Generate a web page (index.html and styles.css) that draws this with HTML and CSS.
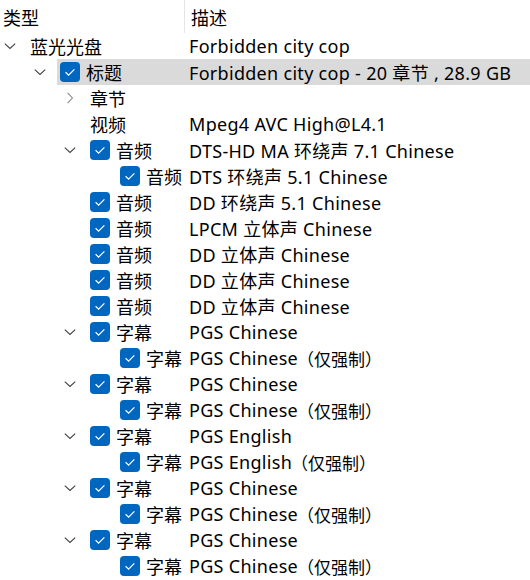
FILE: index.html
```html
<!DOCTYPE html>
<html lang="zh-CN">
<head>
  <meta charset="UTF-8">
  <meta name="viewport" content="width=device-width, initial-scale=1.0">
  <title>光盘内容</title>
  <link rel="stylesheet" href="styles.css">
</head>
<body>
  <div class="tree-view">
    <div class="header">
      <div class="col col-type">类型</div>
      <div class="col col-desc">描述</div>
    </div>

    <div class="row">
      <div class="tree l0"><span class="twisty open"></span><span class="name">蓝光光盘</span></div>
      <div class="desc">Forbidden city cop</div>
    </div>
    <div class="row selected">
      <div class="tree l1"><span class="twisty open"></span><span class="name"><span class="check"></span>标题</span></div>
      <div class="desc">Forbidden city cop - 20 章节 , 28.9 GB</div>
    </div>
    <div class="row">
      <div class="tree l2"><span class="twisty closed"></span><span class="name">章节</span></div>
      <div class="desc"></div>
    </div>
    <div class="row">
      <div class="tree l2"><span class="twisty"></span><span class="name">视频</span></div>
      <div class="desc">Mpeg4 AVC High@L4.1</div>
    </div>
    <div class="row">
      <div class="tree l2"><span class="twisty open"></span><span class="name"><span class="check"></span>音频</span></div>
      <div class="desc">DTS-HD MA 环绕声 7.1 Chinese</div>
    </div>
    <div class="row">
      <div class="tree l3"><span class="twisty"></span><span class="name"><span class="check"></span>音频</span></div>
      <div class="desc">DTS 环绕声 5.1 Chinese</div>
    </div>
    <div class="row">
      <div class="tree l2"><span class="twisty"></span><span class="name"><span class="check"></span>音频</span></div>
      <div class="desc">DD 环绕声 5.1 Chinese</div>
    </div>
    <div class="row">
      <div class="tree l2"><span class="twisty"></span><span class="name"><span class="check"></span>音频</span></div>
      <div class="desc">LPCM 立体声 Chinese</div>
    </div>
    <div class="row">
      <div class="tree l2"><span class="twisty"></span><span class="name"><span class="check"></span>音频</span></div>
      <div class="desc">DD 立体声 Chinese</div>
    </div>
    <div class="row">
      <div class="tree l2"><span class="twisty"></span><span class="name"><span class="check"></span>音频</span></div>
      <div class="desc">DD 立体声 Chinese</div>
    </div>
    <div class="row">
      <div class="tree l2"><span class="twisty"></span><span class="name"><span class="check"></span>音频</span></div>
      <div class="desc">DD 立体声 Chinese</div>
    </div>
    <div class="row">
      <div class="tree l2"><span class="twisty open"></span><span class="name"><span class="check"></span>字幕</span></div>
      <div class="desc">PGS Chinese</div>
    </div>
    <div class="row">
      <div class="tree l3"><span class="twisty"></span><span class="name"><span class="check"></span>字幕</span></div>
      <div class="desc">PGS Chinese<span class="forced">（仅强制）</span></div>
    </div>
    <div class="row">
      <div class="tree l2"><span class="twisty open"></span><span class="name"><span class="check"></span>字幕</span></div>
      <div class="desc">PGS Chinese</div>
    </div>
    <div class="row">
      <div class="tree l3"><span class="twisty"></span><span class="name"><span class="check"></span>字幕</span></div>
      <div class="desc">PGS Chinese<span class="forced">（仅强制）</span></div>
    </div>
    <div class="row">
      <div class="tree l2"><span class="twisty open"></span><span class="name"><span class="check"></span>字幕</span></div>
      <div class="desc">PGS English</div>
    </div>
    <div class="row">
      <div class="tree l3"><span class="twisty"></span><span class="name"><span class="check"></span>字幕</span></div>
      <div class="desc">PGS English<span class="forced">（仅强制）</span></div>
    </div>
    <div class="row">
      <div class="tree l2"><span class="twisty open"></span><span class="name"><span class="check"></span>字幕</span></div>
      <div class="desc">PGS Chinese</div>
    </div>
    <div class="row">
      <div class="tree l3"><span class="twisty"></span><span class="name"><span class="check"></span>字幕</span></div>
      <div class="desc">PGS Chinese<span class="forced">（仅强制）</span></div>
    </div>
    <div class="row">
      <div class="tree l2"><span class="twisty open"></span><span class="name"><span class="check"></span>字幕</span></div>
      <div class="desc">PGS Chinese</div>
    </div>
    <div class="row">
      <div class="tree l3"><span class="twisty"></span><span class="name"><span class="check"></span>字幕</span></div>
      <div class="desc">PGS Chinese<span class="forced">（仅强制）</span></div>
    </div>
  </div>

  <script>
    // Fill the twisties and checkboxes with their icons
    const chevronDown = '<svg width="12" height="12" viewBox="0 0 12 12"><polyline points="0.8,3.6 6,8.4 11.2,3.6" fill="none" stroke="#404040" stroke-width="1.1"/></svg>';
    const chevronRight = '<svg width="12" height="12" viewBox="0 0 12 12"><polyline points="3.6,0.8 8.4,6 3.6,11.2" fill="none" stroke="#8a8a8a" stroke-width="1.1"/></svg>';
    const checkMark = '<svg width="20" height="20" viewBox="0 0 20 20"><rect width="20" height="20" rx="4" fill="#0067c0"/><polyline points="5.6,10.2 8.6,13.1 14.4,7.3" fill="none" stroke="#fff" stroke-width="1.2"/></svg>';

    document.querySelectorAll('.twisty.open').forEach(el => el.innerHTML = chevronDown);
    document.querySelectorAll('.twisty.closed').forEach(el => el.innerHTML = chevronRight);
    document.querySelectorAll('.check').forEach(el => el.innerHTML = checkMark);
  </script>
</body>
</html>
```

FILE: styles.css
```css
/* General reset */
* {
  margin: 0;
  padding: 0;
  box-sizing: border-box;
}

body {
  background-color: #fff;
  font-family: "Noto Sans", "Noto Sans CJK SC", sans-serif;
  font-size: 18px;
  color: #000;
  overflow: hidden;
}

/* Column header */
.header {
  display: grid;
  grid-template-columns: 185px 1fr;
  height: 33px;
}

.col {
  display: flex;
  align-items: center;
}

.col-type {
  padding-left: 3px;
  border-right: 1px solid #e5e5e5;
}

.col-desc {
  padding-left: 6px;
}

/* Tree rows */
.row {
  display: grid;
  grid-template-columns: 189px 1fr;
  height: 26px;
  white-space: nowrap;
}

.tree {
  display: flex;
  align-items: stretch;
}

.l0 { padding-left: 0; }
.l1 { padding-left: 30px; }
.l2 { padding-left: 60px; }
.l3 { padding-left: 90px; }

.twisty {
  flex: none;
  width: 27px;
  display: flex;
  align-items: center;
  padding-left: 4px;
}

.twisty svg {
  display: block;
}

.name {
  flex: 1;
  display: flex;
  align-items: center;
  padding-left: 3px;
}

.check {
  display: flex;
  margin-right: 6px;
}

.check svg {
  display: block;
}

.desc {
  display: flex;
  align-items: center;
  letter-spacing: 0.3px;
}

/* "forced only" note after a subtitle track */
.forced {
  font-size: 17px;
  letter-spacing: 0;
  margin-left: -1px;
}

.selected .name,
.selected .desc {
  background-color: #dadada;
}
```
